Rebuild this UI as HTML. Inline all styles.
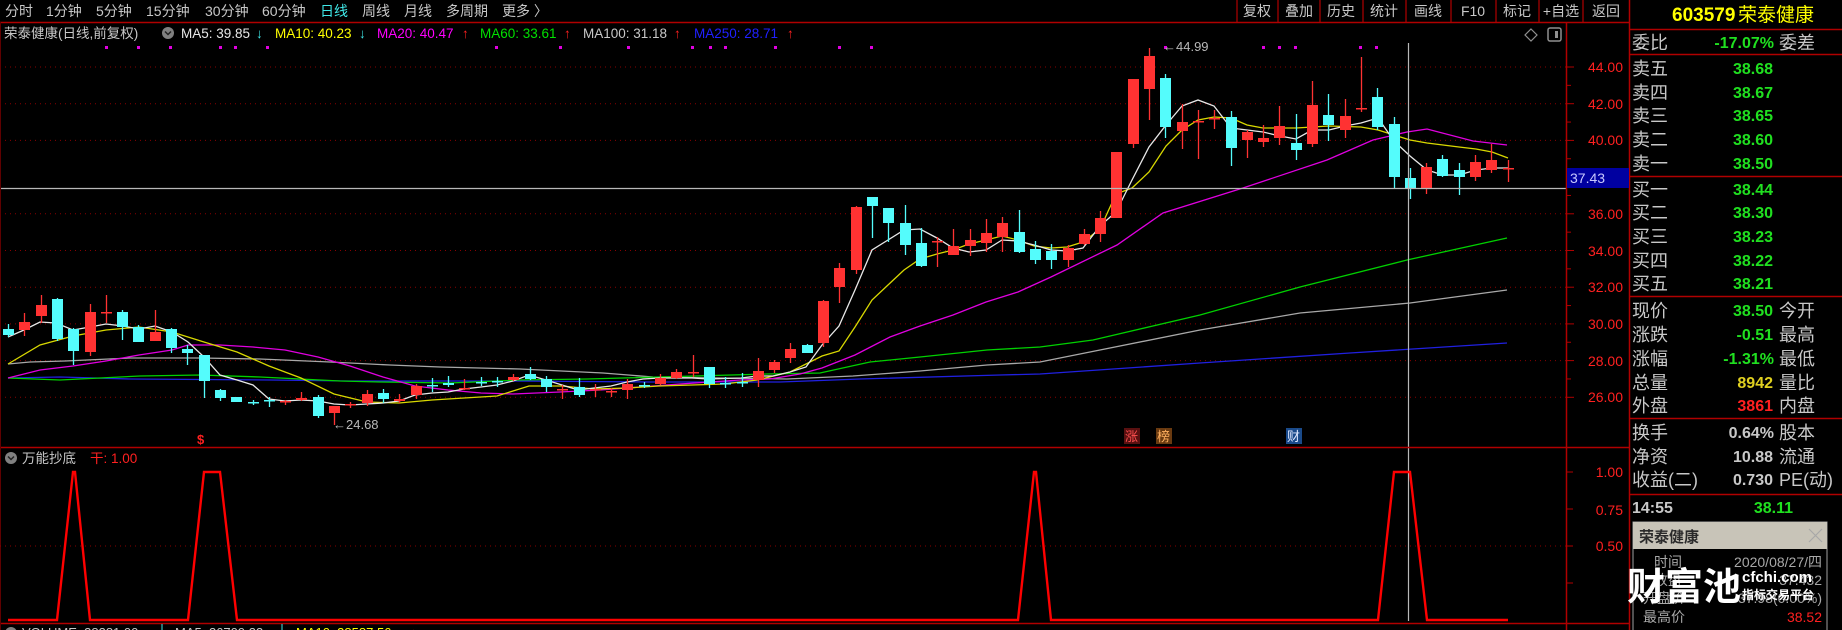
<!DOCTYPE html>
<html><head><meta charset="utf-8">
<style>
html,body{margin:0;padding:0;background:#000;}
body{width:1842px;height:630px;overflow:hidden;position:relative;font-family:"Liberation Sans","WenQuanYi Zen Hei","Noto Sans CJK SC",sans-serif;}
svg{position:absolute;left:0;top:0;}
text{font-family:"Liberation Sans","WenQuanYi Zen Hei","Noto Sans CJK SC",sans-serif;}
</style></head>
<body>
<svg id="s" width="1842" height="630" viewBox="0 0 1842 630" xmlns="http://www.w3.org/2000/svg">
<rect width="1842" height="630" fill="#000"/>
<g id="grid" stroke="#8a0000" stroke-width="1" stroke-dasharray="1,4"></g>
<g id="ma" fill="none" stroke-width="1.3"></g>
<g id="cd"></g>
<line x1="0" y1="188.5" x2="1566" y2="188.5" stroke="#b8b8b8" stroke-width="1.2"/>
<line x1="1408.5" y1="43" x2="1408.5" y2="621" stroke="#b8b8b8" stroke-width="1.2"/>
<line x1="0" y1="22.5" x2="1629" y2="22.5" stroke="#b00000" stroke-width="1.5"/>
<line x1="0" y1="447.5" x2="1629" y2="447.5" stroke="#b00000" stroke-width="1.5"/>
<line x1="0" y1="623.5" x2="1629" y2="623.5" stroke="#b00000" stroke-width="1.5"/>
<line x1="1566.5" y1="22" x2="1566.5" y2="630" stroke="#b00000" stroke-width="1.5"/>
<line x1="1629.5" y1="0" x2="1629.5" y2="630" stroke="#b00000" stroke-width="1.5"/>
<line x1="0.5" y1="22" x2="0.5" y2="630" stroke="#600000" stroke-width="1"/>
<g id="ticks" stroke="#b00000" stroke-width="1"></g>
<g font-size="14" fill="#c8c8c8">
<text x="5" y="16">分时</text><text x="46" y="16">1分钟</text><text x="96" y="16">5分钟</text><text x="146" y="16">15分钟</text>
<text x="205" y="16">30分钟</text><text x="262" y="16">60分钟</text><text x="320" y="16" fill="#40e8e8">日线</text>
<text x="362" y="16">周线</text><text x="404" y="16">月线</text><text x="446" y="16">多周期</text><text x="502" y="16">更多 〉</text>
</g>
<g stroke="#b00000" stroke-width="1.2">
<line x1="1237" y1="0" x2="1237" y2="22"/><line x1="1278" y1="0" x2="1278" y2="22"/><line x1="1320" y1="0" x2="1320" y2="22"/>
<line x1="1363" y1="0" x2="1363" y2="22"/><line x1="1406" y1="0" x2="1406" y2="22"/><line x1="1451" y1="0" x2="1451" y2="22"/>
<line x1="1496" y1="0" x2="1496" y2="22"/><line x1="1539" y1="0" x2="1539" y2="22"/><line x1="1583" y1="0" x2="1583" y2="22"/>
</g>
<g font-size="14" fill="#c8c8c8" text-anchor="middle">
<text x="1257" y="16">复权</text><text x="1299" y="16">叠加</text><text x="1341" y="16">历史</text><text x="1384" y="16">统计</text>
<text x="1428" y="16">画线</text><text x="1473" y="16">F10</text><text x="1517" y="16">标记</text><text x="1561" y="16">+自选</text><text x="1606" y="16">返回</text>
</g>
<g font-size="13.5">
<text x="4" y="38" fill="#c8c8c8">荣泰健康(日线,前复权)</text>
<circle cx="168" cy="33" r="6" fill="#808080"/><path d="M165 31.5 L168 34.5 L171 31.5" stroke="#222" stroke-width="1.5" fill="none"/>
<text x="181" y="38" fill="#e8e8e8">MA5: 39.85</text><text x="256" y="38" fill="#40e8e8">↓</text>
<text x="275" y="38" fill="#ffff00">MA10: 40.23</text><text x="359" y="38" fill="#40e8e8">↓</text>
<text x="377" y="38" fill="#ff00ff">MA20: 40.47</text><text x="462" y="38" fill="#ff2020">↑</text>
<text x="480" y="38" fill="#00e000">MA60: 33.61</text><text x="564" y="38" fill="#ff2020">↑</text>
<text x="583" y="38" fill="#c8c8c8">MA100: 31.18</text><text x="674" y="38" fill="#ff2020">↑</text>
<text x="694" y="38" fill="#2020ff">MA250: 28.71</text><text x="787" y="38" fill="#ff2020">↑</text>
</g>
<g id="dots" fill="#e000e0"></g>
<path d="M1531 29 L1537 35 L1531 41 L1525 35 Z" fill="none" stroke="#909090" stroke-width="1.2"/>
<rect x="1548" y="28" width="13" height="13" rx="2" fill="none" stroke="#909090" stroke-width="1.5"/><rect x="1555" y="31" width="3" height="7" fill="#909090"/>
<g font-size="14" fill="#ff2020" text-anchor="end">
<text x="1623" y="72">44.00</text><text x="1623" y="109">42.00</text><text x="1623" y="145">40.00</text>
<text x="1623" y="219">36.00</text><text x="1623" y="256">34.00</text><text x="1623" y="292">32.00</text>
<text x="1623" y="329">30.00</text><text x="1623" y="366">28.00</text><text x="1623" y="402">26.00</text>
<text x="1623" y="477">1.00</text><text x="1623" y="515">0.75</text><text x="1623" y="551">0.50</text>
</g>
<rect x="1567" y="168" width="62" height="20" fill="#0000a0"/>
<text x="1570" y="183" font-size="14" fill="#c8c8ff">37.43</text>
<g font-size="13" fill="#b8b8b8">
<text x="1163" y="51">←44.99</text>
<text x="333" y="429">←24.68</text>
</g>
<text x="197" y="444" font-size="13" fill="#ff2020" font-weight="bold">$</text>
<rect x="1124" y="428" width="16" height="16" fill="#5a1010"/><text x="1125" y="441" font-size="13" fill="#ff5050">涨</text>
<rect x="1156" y="428" width="16" height="16" fill="#6a3a10"/><text x="1157" y="441" font-size="13" fill="#ffb060">榜</text>
<rect x="1286" y="428" width="16" height="16" fill="#1a4a8a"/><text x="1287" y="441" font-size="13" fill="#e0e8ff">财</text>
<circle cx="11" cy="458" r="6" fill="#808080"/><path d="M8 456.5 L11 459.5 L14 456.5" stroke="#222" stroke-width="1.5" fill="none"/>
<text x="22" y="463" font-size="13.5" fill="#c8c8c8">万能抄底</text>
<text x="90" y="463" font-size="13.5" fill="#ff2020">干: 1.00</text>
<line x1="0" y1="546" x2="1566" y2="546" stroke="#8a0000" stroke-dasharray="1,4"/>
<polyline fill="none" stroke="#ff0000" stroke-width="2.4" points="8,620 57,620 73,472 75,472 90,620 188,620 204,472 220,472 237,620 1018,620 1034,472 1036,472 1051,620 1378,620 1394,472 1410,472 1427,620 1508,620"/>
<g font-size="13">
<circle cx="11" cy="633" r="6" fill="#808080"/>
<text x="22" y="637" fill="#c8c8c8">VOLUME: 38381.00</text>
<line x1="162" y1="624" x2="162" y2="630" stroke="#40e8e8"/>
<text x="175" y="637" fill="#c8c8c8">MA5: 36709.33</text>
<line x1="282" y1="624" x2="282" y2="630" stroke="#40e8e8"/>
<text x="296" y="637" fill="#ffff00">MA10: 38587.56</text>
<text x="410" y="637" fill="#ff2020">↑</text>
</g>
<line x1="1629" y1="29.5" x2="1842" y2="29.5" stroke="#b00000" stroke-width="1.5"/>
<line x1="1629" y1="54.5" x2="1842" y2="54.5" stroke="#b00000" stroke-width="1.5"/>
<line x1="1629" y1="176.5" x2="1842" y2="176.5" stroke="#b00000" stroke-width="1.5"/>
<line x1="1629" y1="296.5" x2="1842" y2="296.5" stroke="#b00000" stroke-width="1.5"/>
<line x1="1629" y1="418.5" x2="1842" y2="418.5" stroke="#b00000" stroke-width="1.5"/>
<line x1="1629" y1="494.5" x2="1842" y2="494.5" stroke="#b00000" stroke-width="1.5"/>
<text x="1672" y="21" font-size="19" fill="#ffff00" font-weight="bold">603579</text>
<text x="1738" y="21" font-size="19" fill="#ffff00">荣泰健康</text>
<g font-size="18" fill="#c8c8c8">
<text x="1632" y="49">委比</text><text x="1779" y="49">委差</text>
<text x="1632" y="75">卖五</text><text x="1632" y="99">卖四</text><text x="1632" y="122">卖三</text><text x="1632" y="146">卖二</text><text x="1632" y="170">卖一</text>
<text x="1632" y="196">买一</text><text x="1632" y="219">买二</text><text x="1632" y="243">买三</text><text x="1632" y="267">买四</text><text x="1632" y="290">买五</text>
<text x="1632" y="317">现价</text><text x="1632" y="341">涨跌</text><text x="1632" y="365">涨幅</text><text x="1632" y="389">总量</text><text x="1632" y="412">外盘</text>
<text x="1779" y="317">今开</text><text x="1779" y="341">最高</text><text x="1779" y="365">最低</text><text x="1779" y="389">量比</text><text x="1779" y="412">内盘</text>
<text x="1632" y="439">换手</text><text x="1632" y="463">净资</text><text x="1632" y="486">收益(二)</text>
<text x="1779" y="439">股本</text><text x="1779" y="463">流通</text><text x="1779" y="486">PE(动)</text>
</g>
<g font-size="16" font-weight="bold" text-anchor="end" fill="#20e020">
<text x="1774" y="48">-17.07%</text>
<text x="1773" y="74">38.68</text><text x="1773" y="98">38.67</text><text x="1773" y="121">38.65</text><text x="1773" y="145">38.60</text><text x="1773" y="169">38.50</text>
<text x="1773" y="195">38.44</text><text x="1773" y="218">38.30</text><text x="1773" y="242">38.23</text><text x="1773" y="266">38.22</text><text x="1773" y="289">38.21</text>
<text x="1773" y="316">38.50</text><text x="1773" y="340">-0.51</text><text x="1774" y="364">-1.31%</text>
<text x="1773" y="388" fill="#e0d020">8942</text><text x="1773" y="411" fill="#ff2020">3861</text>
<text x="1774" y="438" fill="#c8c8c8">0.64%</text><text x="1773" y="462" fill="#c8c8c8">10.88</text><text x="1773" y="485" fill="#c8c8c8">0.730</text>
</g>
<text x="1632" y="513" font-size="16" font-weight="bold" fill="#c8c8c8">14:55</text>
<text x="1793" y="513" font-size="16" font-weight="bold" fill="#20e020" text-anchor="end">38.11</text>
<rect x="1633" y="522" width="194" height="110" fill="#000" stroke="#a0a0a0" stroke-width="1"/>
<rect x="1633" y="522" width="194" height="27" fill="#c8c4b8"/>
<text x="1639" y="542" font-size="15" fill="#2a2a2a" font-weight="bold">荣泰健康</text>
<path d="M1809 529 L1822 542 M1822 529 L1809 542" stroke="#a8a8a8" stroke-width="1.2"/>
<g font-size="14" fill="#a8a8a8">
<text x="1654" y="567">时间</text><text x="1822" y="567" text-anchor="end">2020/08/27/四</text>
<text x="1654" y="585">收盘</text><text x="1822" y="585" text-anchor="end">37.432</text>
<text x="1643" y="603">开盘价</text><text x="1822" y="603" text-anchor="end">37.98(0.00%)</text>
<text x="1643" y="622">最高价</text><text x="1822" y="622" text-anchor="end" fill="#ff2020">38.52</text>
</g>
<text x="1627" y="600" font-size="38" font-weight="bold" fill="#ffffff">财富池</text>
<text x="1742" y="582" font-size="15" font-weight="bold" fill="#ffffff">cfchi.com</text>
<text x="1742" y="599" font-size="12" font-weight="bold" fill="#ffffff">指标交易平台</text>
</svg>
<script>
(function(){
var NS="http://www.w3.org/2000/svg";
function el(p,t,a){var e=document.createElementNS(NS,t);for(var k in a)e.setAttribute(k,a[k]);p.appendChild(e);return e;}
var g=document.getElementById('grid');
[67,103.7,140.4,213.8,250.5,287.2,323.9,360.6,397.3].forEach(function(y){el(g,'line',{x1:0,y1:y,x2:1566,y2:y});});
var tk=document.getElementById('ticks');
for(var i=0;i<19;i++){var y=67+i*18.35;if(y>440)break;el(tk,'line',{x1:1566,y1:y,x2:(i%2?1571:1574),y2:y});}
[472,509,546,583].forEach(function(y,i){el(tk,'line',{x1:1566,y1:y,x2:1573,y2:y});});
var D="c 329 335 324 337|r 322 330 313 336|r 305 316 295 323|c 299 339 298 341|c 329 351 328 365|r 312 352 304 356|r 312 313 295 323|c 312 327 310 340|c 327 342 325 342|r 332 341 310 341|c 329 348 328 353|c 349 353 345 365|c 355 381 355 398|c 390 398 389 401|c 397 402 397 402|c 402 403 400 405|c 400 401 397 407|r 401 402 400 405|r 398 400 392 401|c 397 416 395 418|r 406 413 406 425|r 404 405 402 408|r 394 403 390 406|c 393 399 389 403|r 399 401 394 403|r 386 395 384 399|c 385 386 378 392|c 383 385 376 387|r 388 389 379 390|c 382 383 377 386|c 381 382 377 387|r 377 380 374 381|c 374 379 367 380|c 379 387 376 392|r 389 390 385 399|c 387 395 378 397|r 389 390 384 397|r 391 392 388 397|r 384 390 379 399|c 385 386 382 388|r 378 384 374 385|r 372 378 369 379|r 372 373 355 377|c 367 384 367 388|c 383 384 377 388|c 382 383 373 387|r 371 380 358 387|r 362 370 360 373|r 349 358 343 363|c 345 353 344 353|r 301 343 300 347|r 268 287 263 303|r 207 270 206 274|c 197 206 197 238|c 208 223 208 242|c 223 245 205 255|c 243 266 228 267|r 241 242 237 267|r 246 255 229 255|r 240 246 229 256|r 233 243 219 252|r 223 237 217 252|c 232 252 210 253|c 249 260 241 264|c 251 260 244 269|r 248 260 245 267|r 234 244 229 245|r 218 234 211 242|r 152 218 152 218|r 79 144 79 148|r 56 89 48 120|c 78 127 74 138|r 122 131 104 149|r 121 122 110 159|r 118 119 110 129|c 117 148 111 166|r 132 140 130 158|r 138 142 125 147|r 126 138 106 145|c 143 150 114 160|r 105 144 81 147|c 115 125 94 141|r 116 130 99 138|r 108 109 57 112|c 97 127 88 130|c 124 177 117 188|c 178 188 168 199|r 167 188 163 194|c 159 176 155 177|c 170 177 163 195|r 162 177 155 181|r 160 170 144 173|r 168 169 160 182";
var cd=document.getElementById('cd');
D.split('|').forEach(function(s,i){var a=s.split(' ');var x=Math.round(8+16.3*i);var col=a[0]=='r'?'#ff3232':'#54fcfc';
var bt=+a[1],bb=+a[2],wt=+a[3],wb=+a[4];
el(cd,'line',{x1:x+0.5,y1:wt,x2:x+0.5,y2:wb,stroke:col,'stroke-width':1.3});
var h=Math.max(bb-bt,1.5);el(cd,'rect',{x:x-5,y:bt,width:11,height:h,fill:col});});
var ma=document.getElementById('ma');
function pl(c,p){el(ma,'polyline',{points:p,stroke:c});}
pl('#2020e0',"8,378 60,377 130,379 270,380 350,381 513,381 650,382 780,382 860,379 1000,375 1040,374 1200,363 1350,353 1507,343");
pl('#a8a8a8',"8,364 30,362 65,361 130,358 200,358 260,359 330,362 390,365 440,367 520,369 603,373 653,377 787,379 853,376 920,371 987,365 1040,362 1100,350 1200,330 1300,313 1410,303 1507,290");
pl('#00d000',"8,378 60,380 100,378 140,376 200,375 260,377 300,379 340,381 380,382 450,383 520,380 587,379 767,374 820,373 870,362 920,357 987,350 1040,347 1093,340 1200,315 1300,287 1407,260 1507,238");
pl('#e000e0',"8,378 40,370 73,366 106,361 139,355 172,350 188,345 220,345 253,347 285,350 318,357 350,366 383,377 415,386 448,390 481,393 513,394 560,392 600,390 640,387 680,384 710,382 740,380 770,379 800,374 822,368 855,355 890,337 920,326 953,315 986,302 1018,292 1051,277 1117,245 1163,213 1243,188 1327,160 1373,140 1407,132 1427,129 1473,141 1507,145");
pl('#d8d800',"8,364 40,345 73,336 106,330 139,327 172,332 204,342 237,352 269,366 301,378 334,394 367,402 399,403 432,400 464,398 497,396 529,386 562,386 594,389 627,388 659,386 692,385 724,384 757,380 790,372 822,356 839,351 855,327 872,300 888,285 904,270 920,259 937,254 953,250 969,244 986,240 1002,236 1018,240 1034,246 1051,248 1067,247 1083,242 1100,229 1116,194 1132,188 1149,172 1166,146 1182,130 1198,120 1214,117 1231,118 1247,125 1263,128 1296,128 1329,126 1361,127 1378,130 1394,135 1410,140 1427,143 1443,145 1459,147 1476,149 1492,152 1508,158");
pl('#e8e8e8',"8,337 24,330 40,322 56,323 73,330 90,327 106,324 123,326 139,329 155,326 172,332 188,342 204,357 220,375 237,380 253,385 269,399 285,401 301,400 318,401 334,404 350,405 367,404 383,403 399,401 415,395 432,393 448,392 464,389 481,387 497,385 513,381 529,375 546,380 562,385 578,390 594,388 611,386 627,382 643,379 659,378 692,378 708,379 741,378 757,376 773,376 790,372 806,367 822,345 839,326 855,290 872,250 888,240 904,230 920,229 937,238 953,248 969,252 986,250 1002,240 1018,241 1034,245 1051,250 1067,251 1083,248 1100,226 1116,212 1132,180 1149,147 1166,125 1182,106 1198,100 1214,106 1231,128 1247,130 1263,132 1280,136 1296,139 1312,130 1329,130 1345,126 1361,123 1378,118 1394,141 1410,156 1427,170 1443,175 1459,175 1476,170 1492,168 1508,168");
var dt=document.getElementById('dots');
[106,138,170,220,235,267,496,560,628,692,710,725,775,839,871,1165,1263,1279,1295,1360,1376].forEach(function(x){el(dt,'rect',{x:x-1,y:46,width:3,height:3});});
})();
</script>
</body></html>
